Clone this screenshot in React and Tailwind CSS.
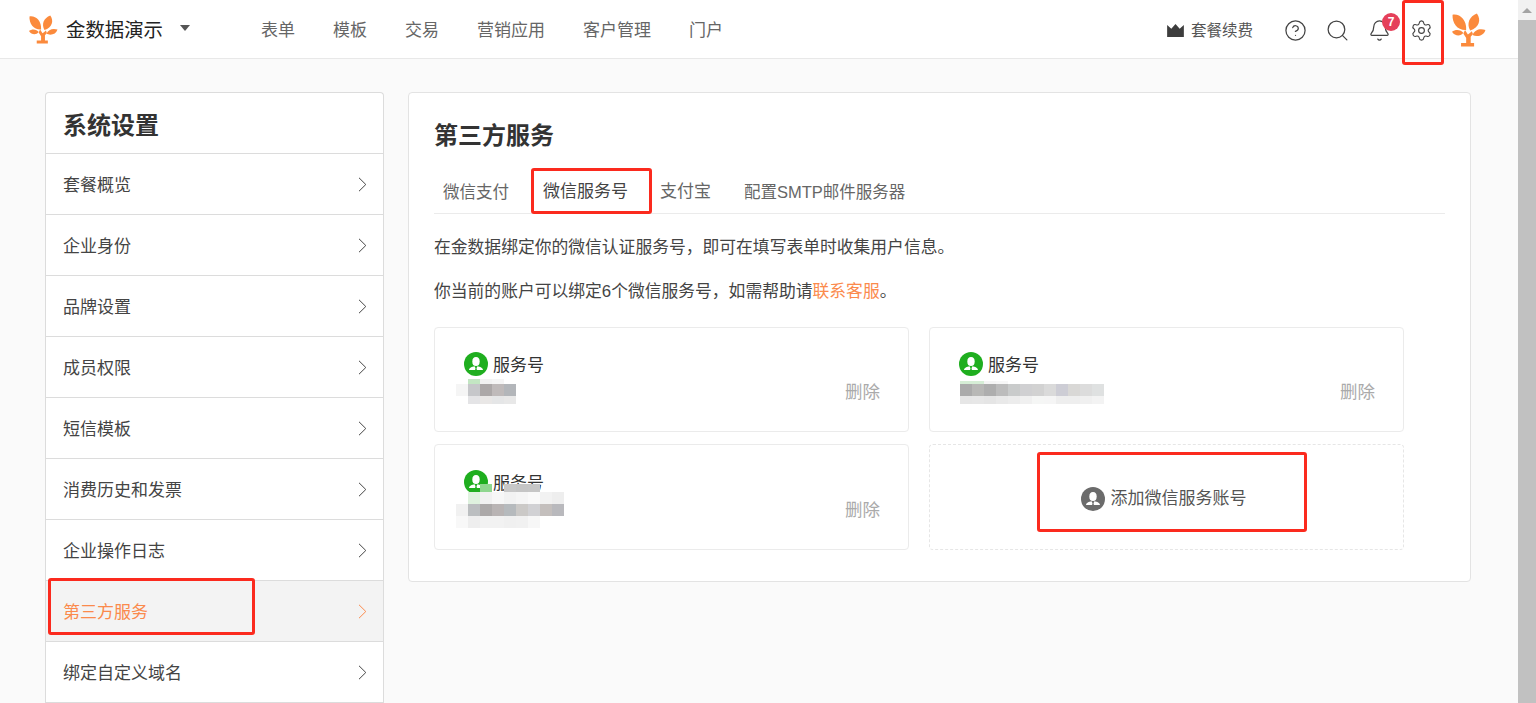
import { Bell, CircleHelp, Search, Settings } from 'lucide-react';

const NAV_ITEMS = ['表单', '模板', '交易', '营销应用', '客户管理', '门户'];
const MENU_ITEMS = ['套餐概览', '企业身份', '品牌设置', '成员权限', '短信模板', '消费历史和发票', '企业操作日志', '第三方服务', '绑定自定义域名'];

function TreeLogo({ className }) {
    return (
        <svg viewBox="0 0 30 30" className={className} fill="#fb8a3c">
            <path d="M0.5 1.5C7 0.5 13 6 12.5 15C5 15.5 0 9 0.5 1.5Z" />
            <path d="M22 0.5C26 6 24 13 16 15.5C12.5 9 15.5 3 22 0.5Z" />
            <path d="M0 16.5C3 14 8 14.5 10 17.5C7.5 21 2.5 20.5 0 16.5Z" />
            <path d="M29.5 15C28 20 22.5 21.5 18 19.5C20 14.5 25 13.5 29.5 15Z" />
            <path d="M11.5 15L14 19C15 18 16.5 17 17.5 16L18.5 18.5L16.5 21V26.5H19.5V29.5H8V26.5H12.5V22L10 18Z" />
        </svg>
    );
}

function PersonBadge({ tone }) {
    return (
        <span className={`flex h-6 w-6 shrink-0 items-center justify-center rounded-full ${tone}`}>
            <svg viewBox="0 0 24 24" className="h-6 w-6" fill="#fff">
                <ellipse cx="12" cy="9.4" rx="3.7" ry="4.5" />
                <path d="M5 18C5.2 15.6 7.8 14.8 10.6 14.2L11.5 16.2L11.1 18H12.9L12.5 16.2L13.4 14.2C16.2 14.8 18.8 15.6 19 18Z" />
            </svg>
        </span>
    );
}

// red marks drawn over the screenshot
function RedMark({ className }) {
    return <div className={`pointer-events-none absolute rounded-[3px] border-[3px] border-[#fb2a1e] ${className}`} />;
}

function MosaicRow({ cells, className = '' }) {
    return (
        <div className={`flex ${className}`}>
            {cells.map((cell, i) => (
                <div key={i} className={`w-3 ${cell}`} />
            ))}
        </div>
    );
}

function MosaicOne() {
    return (
        <div className="absolute left-[21px] top-[51px] flex flex-col">
            <MosaicRow className="h-[5px]" cells={['bg-transparent', 'bg-[#c3e6c3]', 'bg-[#f2f2f2]', 'bg-[#f5f5f5]']} />
            <MosaicRow className="h-3" cells={['bg-[#f5f5f5]', 'bg-[#c6c7ca]', 'bg-[#aca8a8]', 'bg-[#bfbaba]', 'bg-[#b3b6ba]']} />
            <MosaicRow className="h-2" cells={['bg-transparent', 'bg-[#e4e4e6]', 'bg-[#e9e7e6]', 'bg-[#e5e6e7]', 'bg-[#e8e8e8]']} />
        </div>
    );
}

function MosaicTwo() {
    return (
        <div className="absolute left-[30px] top-[53px] flex flex-col">
            <MosaicRow className="h-[3px]" cells={['bg-[#d6eed6]', 'bg-[#d6eed6]', 'bg-[#f5f5f5]', 'bg-[#f7f7f7]']} />
            <MosaicRow className="h-3" cells={['bg-[#ababab]', 'bg-[#b8b8b6]', 'bg-[#aeaeae]', 'bg-[#bcbcbc]', 'bg-[#c9cbcb]', 'bg-[#d0d0d2]', 'bg-[#d2d2d2]', 'bg-[#dadada]', 'bg-[#cdcdd5]', 'bg-[#d9d8d6]', 'bg-[#dcdcdc]', 'bg-[#dfe1e1]']} />
            <MosaicRow className="h-2" cells={['bg-[#e6e6e6]', 'bg-[#e7e7e7]', 'bg-[#e5e5e5]', 'bg-[#e9e9e9]', 'bg-[#ececec]', 'bg-[#f0f0f0]', 'bg-[#f5f6f5]', 'bg-[#f5f5f5]', 'bg-[#eeeeee]', 'bg-[#eeeeee]', 'bg-[#f0f0f0]', 'bg-[#f3f3f3]']} />
        </div>
    );
}

function MosaicThree() {
    return (
        <div className="absolute left-[21px] top-[39px] flex flex-col">
            <MosaicRow className="h-[8px]" cells={['bg-transparent', 'bg-transparent', 'bg-[#8fd68f]', 'bg-transparent', 'bg-[#c8c8c8]', 'bg-[#c5c5c5]', 'bg-[#c6c6c6]', 'bg-transparent', 'bg-transparent']} />
            <MosaicRow className="h-3" cells={['bg-transparent', 'bg-[#dff2df]', 'bg-[#f1f1f1]', 'bg-[#f7f7f7]', 'bg-[#f2f2f2]', 'bg-[#f5f5f5]', 'bg-[#f9f9f9]', 'bg-[#f2f2f2]', 'bg-[#eeeeee]']} />
            <MosaicRow className="h-3" cells={['bg-[#f1f1f1]', 'bg-[#bbbec0]', 'bg-[#aca9a9]', 'bg-[#b9b4b4]', 'bg-[#b6babd]', 'bg-[#cbc9c7]', 'bg-[#d1d1d4]', 'bg-[#c4bfbd]', 'bg-[#b9b9bd]']} />
            <MosaicRow className="h-3" cells={['bg-[#f8f8f8]', 'bg-[#eeeeee]', 'bg-[#f2f2f2]', 'bg-[#f2f2f2]', 'bg-[#f0f0f0]', 'bg-[#f1f1f1]', 'bg-[#f7f7f7]', 'bg-white', 'bg-white']} />
        </div>
    );
}

function ServiceCard({ mosaic, tall }) {
    return (
        <div className={`relative flex items-start justify-between rounded-[4px] border border-[#ebebeb] bg-white pl-[29px] pr-[28px] ${tall ? 'h-[106px] pt-[25px]' : 'h-[105px] pt-[24px]'}`}>
            <div className="flex items-center gap-[5px] text-[17px] leading-6 text-[#333]">
                <PersonBadge tone="bg-[#1fae1f]" />
                <span className="relative top-[2px]">服务号</span>
            </div>
            <span className="mt-[28px] text-[17.5px] leading-6 text-[#aaa]">删除</span>
            {mosaic}
        </div>
    );
}

function MenuRow({ label, active }) {
    return (
        <div className={`flex h-[61px] items-center justify-between border-t border-[#dcdcdc] pl-[17px] pr-[16px] text-[17px] ${active ? 'bg-[#f3f3f3] text-[#fb8a4c]' : 'text-[#444]'}`}>
            <span className="relative top-[2px]">{label}</span>
            <svg viewBox="0 0 9 15" className="h-[15px] w-[9px]" fill="none" stroke="currentColor" strokeWidth="1">
                <path d="M1 0.8L7.8 7.5L1 14.2" />
            </svg>
        </div>
    );
}

function Header() {
    return (
        <header className="relative flex h-[59px] shrink-0 items-center border-b border-[#e8e8e8] bg-white pl-[29px] pr-[32px]">
            <TreeLogo className="h-[29px] w-[29px]" />
            <span className="relative top-[2px] ml-[8px] text-[19.4px] text-[#222]">金数据演示</span>
            <span className="ml-[17px] mb-[3px] h-0 w-0 border-x-[5px] border-t-[6px] border-x-transparent border-t-[#555]" />
            <nav className="relative top-[2px] ml-[71px] flex gap-[38px] text-[17px] text-[#666]">
                {NAV_ITEMS.map((item) => (
                    <span key={item}>{item}</span>
                ))}
            </nav>
            <div className="ml-auto flex items-center pt-[2px] text-[#444]">
                <svg viewBox="0 0 18 14" className="h-[13px] w-[17px]" fill="#3d3d3d">
                    <path d="M0 1L4.5 5L9 0L13.5 5L18 1V14H0Z" />
                </svg>
                <span className="relative top-[1px] ml-[7px] text-[15.5px] text-[#555]">套餐续费</span>
                <CircleHelp className="ml-[31px] h-[23px] w-[23px]" strokeWidth={1.3} />
                <Search className="ml-[18px] h-[25px] w-[25px]" strokeWidth={1.2} />
                <div className="relative ml-[18px]">
                    <Bell className="h-[23px] w-[23px]" strokeWidth={1.3} />
                    <span className="absolute -right-[9px] -top-[6px] flex h-[18px] w-[18px] items-center justify-center rounded-full bg-[#e5405a] text-[12px] font-bold text-white">7</span>
                </div>
                <Settings className="ml-[19px] h-[23px] w-[23px]" strokeWidth={1.2} />
                <TreeLogo className="ml-[19px] h-[34px] w-[34px]" />
            </div>
            <RedMark className="left-[1402px] top-0 h-[65px] w-[42px]" />
        </header>
    );
}

export default function App() {
    return (
        <div className="flex h-[703px] w-[1536px] overflow-hidden bg-[#fafafa] font-['Liberation_Sans','Noto_Sans_CJK_SC',sans-serif]">
            <div className="flex min-w-0 flex-1 flex-col">
                <Header />
                <main className="flex items-start gap-[24px] pl-[45px] pr-[47px] pt-[33px]">
                    <aside className="relative w-[339px] shrink-0 rounded-t-[4px] border border-b-0 border-[#dcdcdc] bg-white">
                        <h2 className="flex h-[60px] items-center pl-[17px] pt-[5px] text-[24px] font-bold text-[#333]">系统设置</h2>
                        {MENU_ITEMS.map((item) => (
                            <MenuRow key={item} label={item} active={item === '第三方服务'} />
                        ))}
                        <div className="border-t border-[#dcdcdc]" />
                        <RedMark className="left-[2px] top-[485px] h-[57px] w-[207px]" />
                    </aside>
                    <section className="relative h-[490px] flex-1 rounded-[4px] border border-[#e3e3e3] bg-white pl-[25px] pr-[25px]">
                        <h1 className="pt-[24px] text-[24px] font-bold leading-[38px] text-[#333]">第三方服务</h1>
                        <div className="mt-[18px] flex h-[41px] items-center gap-[34px] border-b border-[#ebebeb] pb-[2px] pl-[9px] text-[16.5px] text-[#666]">
                            <span>微信支付</span>
                            <span className="-mr-[2px] text-[17px] text-[#444]">微信服务号</span>
                            <span className="-mr-[1px] text-[17px]">支付宝</span>
                            <span>配置SMTP邮件服务器</span>
                        </div>
                        <p className="mt-[22px] text-[16.8px] leading-6 text-[#444]">在金数据绑定你的微信认证服务号，即可在填写表单时收集用户信息。</p>
                        <p className="mt-[20px] text-[16.8px] leading-6 text-[#444]">
                            你当前的账户可以绑定6个微信服务号，如需帮助请<span className="text-[#fb8a4c]">联系客服</span>。
                        </p>
                        <div className="mt-[23px] grid w-[970px] grid-cols-2 gap-x-[20px] gap-y-[12px]">
                            <ServiceCard mosaic={<MosaicOne />} />
                            <ServiceCard mosaic={<MosaicTwo />} />
                            <ServiceCard tall mosaic={<MosaicThree />} />
                            <div className="flex h-[106px] items-center justify-center gap-[6px] rounded-[4px] border border-dashed border-[#e6e6e6] pr-[6px] pt-[4px] text-[17px] text-[#555]">
                                <PersonBadge tone="bg-[#6b6b6b]" />
                                <span>添加微信服务账号</span>
                            </div>
                        </div>
                        <RedMark className="left-[122px] top-[75px] h-[46px] w-[121px]" />
                        <RedMark className="left-[628px] top-[359px] h-[80px] w-[270px]" />
                    </section>
                </main>
            </div>
            <div className="flex w-[18px] shrink-0 flex-col items-center bg-[#f1f1f1]">
                <span className="mt-[8px] h-0 w-0 border-x-[5px] border-b-[5px] border-x-transparent border-b-[#a3a3a3]" />
                <div className="mt-[7px] w-full flex-1 bg-[#c1c1c1]" />
            </div>
        </div>
    );
}
